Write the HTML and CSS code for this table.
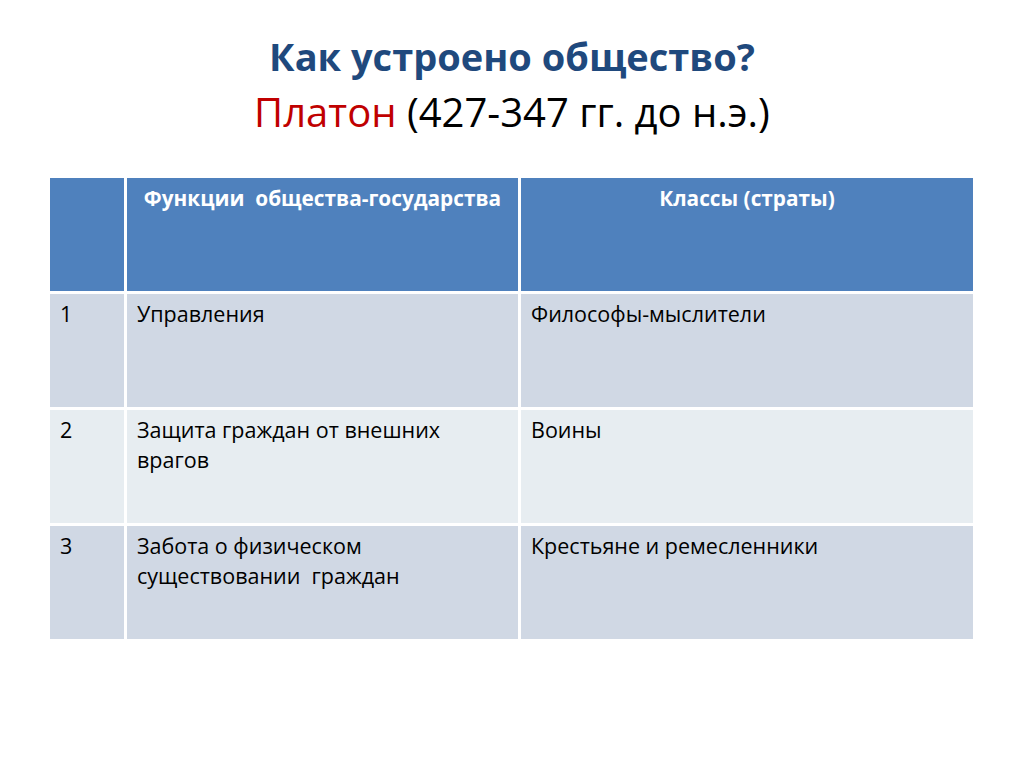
FILE: index.html
```html
<!DOCTYPE html>
<html lang="ru">
<head>
<meta charset="utf-8">
<title>Как устроено общество?</title>
<link rel="stylesheet" href="styles.css">
</head>
<body>
<div class="slide">
  <h1 class="title">
    <span class="title-line1">Как устроено общество?</span>
    <span class="title-line2"><span class="name">Платон</span> (427-347 гг. до н.э.)</span>
  </h1>
  <div class="table">
    <div class="cell head"></div>
    <div class="cell head center">Функции&nbsp; общества-государства</div>
    <div class="cell head center">Классы (страты)</div>

    <div class="cell odd">1</div>
    <div class="cell odd">Управления</div>
    <div class="cell odd">Философы-мыслители</div>

    <div class="cell even">2</div>
    <div class="cell even">Защита граждан от внешних врагов</div>
    <div class="cell even">Воины</div>

    <div class="cell odd">3</div>
    <div class="cell odd">Забота о физическом существовании&nbsp; граждан</div>
    <div class="cell odd">Крестьяне и ремесленники</div>
  </div>
</div>
</body>
</html>
```

FILE: styles.css
```css
html, body {
  margin: 0;
  padding: 0;
  background: #ffffff;
}

.slide {
  width: 1024px;
  height: 767px;
  font-family: "Open Sans", "Noto Sans", "DejaVu Sans", sans-serif;
  padding-top: 29px;
  box-sizing: border-box;
}

.title {
  margin: 0 0 39px 0;
  text-align: center;
  line-height: 55px;
  font-weight: normal;
}

.title-line1 {
  display: block;
  color: #1f497d;
  font-weight: 700;
  font-size: 38px;
}

.title-line2 {
  display: block;
  color: #000000;
  font-size: 40px;
}

.name {
  color: #c00000;
}

.table {
  margin-left: 50px;
  width: 923px;
  display: grid;
  grid-template-columns: 74px 391px 452px;
  grid-template-rows: 113px 113px 113px 113px;
  gap: 3px;
  background: #ffffff;
}

.cell {
  box-sizing: border-box;
  padding: 5px 10px 0 10px;
  font-size: 21.5px;
  line-height: 30px;
  color: #000000;
}

.head {
  background: #4f81bd;
  color: #ffffff;
  font-weight: 700;
  font-size: 20.8px;
}

.center {
  text-align: center;
}

.odd {
  background: #d0d8e4;
}

.even {
  background: #e7edf1;
}
```
